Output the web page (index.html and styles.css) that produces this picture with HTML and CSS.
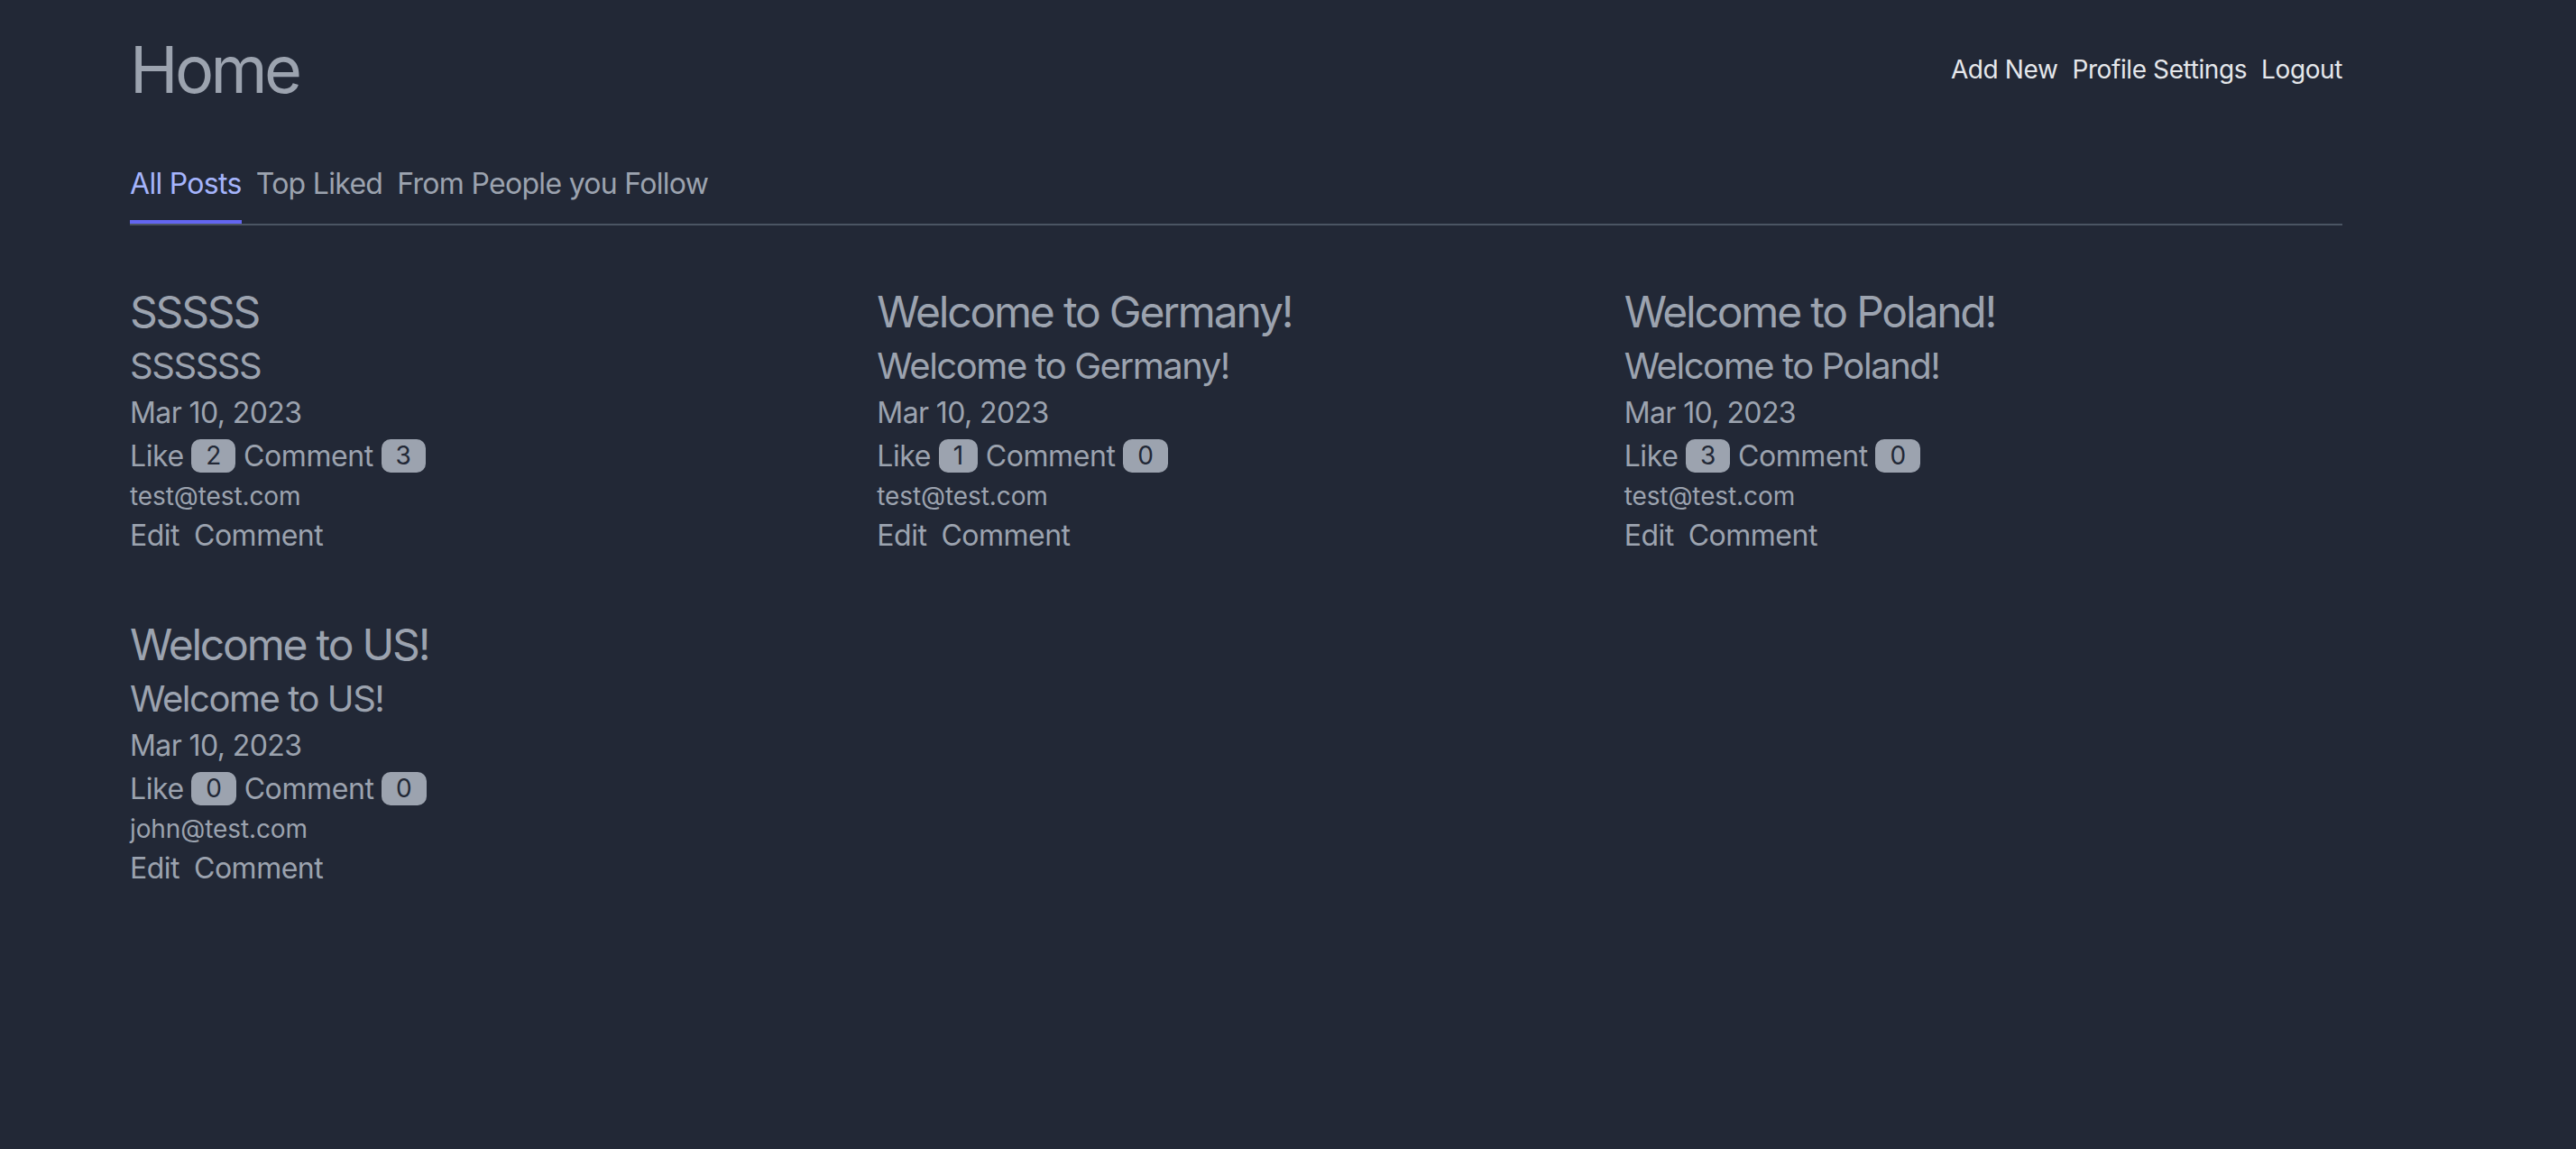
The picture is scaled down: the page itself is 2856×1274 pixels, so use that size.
FILE: index.html
```html
<!DOCTYPE html>
<html lang="en">
<head>
<meta charset="utf-8">
<title>Home</title>
<link rel="stylesheet" href="styles.css">
</head>
<body>
<div class="page">
  <header class="header">
    <h1 class="brand">Home</h1>
    <nav class="nav">
      <a class="nav-link" href="#">Add New</a>
      <a class="nav-link" href="#">Profile Settings</a>
      <a class="nav-link" href="#">Logout</a>
    </nav>
  </header>

  <div class="tabs">
    <a class="tab active" href="#">All Posts</a>
    <a class="tab" href="#">Top Liked</a>
    <a class="tab" href="#">From People you Follow</a>
  </div>

  <main class="posts">
    <article class="post">
      <h2 class="post-title">SSSSS</h2>
      <h3 class="post-sub">SSSSSS</h3>
      <div class="post-date">Mar 10, 2023</div>
      <div class="post-stats">Like <span class="badge">2</span> Comment <span class="badge">3</span></div>
      <div class="post-author">test@test.com</div>
      <div class="post-actions"><a href="#">Edit</a><a href="#">Comment</a></div>
    </article>
    <article class="post">
      <h2 class="post-title">Welcome to Germany!</h2>
      <h3 class="post-sub">Welcome to Germany!</h3>
      <div class="post-date">Mar 10, 2023</div>
      <div class="post-stats">Like <span class="badge">1</span> Comment <span class="badge">0</span></div>
      <div class="post-author">test@test.com</div>
      <div class="post-actions"><a href="#">Edit</a><a href="#">Comment</a></div>
    </article>
    <article class="post">
      <h2 class="post-title">Welcome to Poland!</h2>
      <h3 class="post-sub">Welcome to Poland!</h3>
      <div class="post-date">Mar 10, 2023</div>
      <div class="post-stats">Like <span class="badge">3</span> Comment <span class="badge">0</span></div>
      <div class="post-author">test@test.com</div>
      <div class="post-actions"><a href="#">Edit</a><a href="#">Comment</a></div>
    </article>
    <article class="post">
      <h2 class="post-title">Welcome to US!</h2>
      <h3 class="post-sub">Welcome to US!</h3>
      <div class="post-date">Mar 10, 2023</div>
      <div class="post-stats">Like <span class="badge">0</span> Comment <span class="badge">0</span></div>
      <div class="post-author">john@test.com</div>
      <div class="post-actions"><a href="#">Edit</a><a href="#">Comment</a></div>
    </article>
  </main>
</div>
</body>
</html>
```

FILE: styles.css
```css
* { box-sizing: border-box; }

html, body {
  margin: 0;
  padding: 0;
  background: #222836;
}

body {
  font-family: Inter, "Noto Sans", "Liberation Sans", sans-serif;
  color: #9ca3af;
  min-height: 1274px;
}

a { color: inherit; text-decoration: none; }

.page {
  width: 2453px;
  margin-left: 144px;
  padding-top: 37px;
}

.header {
  display: flex;
  justify-content: space-between;
  align-items: center;
}

.brand {
  margin: 0;
  font-size: 72px;
  line-height: 80px;
  font-weight: 400;
  color: #9ca3af;
  letter-spacing: -3.6px;
}

.nav {
  display: flex;
  gap: 16px;
  font-size: 28px;
  line-height: 40px;
  letter-spacing: -0.4px;
}

.nav-link { color: #e5e7eb; }

.tabs {
  margin-top: 63px;
  display: flex;
  gap: 16px;
  border-bottom: 2px solid #4b5563;
}

.tab {
  font-size: 32px;
  line-height: 48px;
  padding-bottom: 16px;
  border-bottom: 4px solid transparent;
  color: #9ca3af;
  letter-spacing: -0.7px;
}

.tab.active {
  color: #a5b4fc;
  border-bottom-color: #6366f1;
}

.posts {
  margin-top: 64px;
  display: grid;
  grid-template-columns: repeat(3, 1fr);
  column-gap: 32px;
  row-gap: 65px;
}

.post-title {
  margin: 0;
  font-size: 48px;
  line-height: 64px;
  font-weight: 400;
  letter-spacing: -2.2px;
}

.post-sub {
  margin: 0;
  font-size: 40px;
  line-height: 56px;
  font-weight: 400;
  letter-spacing: -1.45px;
}

.post-date,
.post-stats,
.post-actions {
  font-size: 32px;
  line-height: 48px;
}

.post-date { letter-spacing: -0.6px; }
.post-stats { letter-spacing: -0.4px; }
.post-actions { letter-spacing: -0.5px; }

.post-author {
  font-size: 28px;
  line-height: 40px;
  letter-spacing: -0.1px;
}

.badge {
  display: inline-block;
  height: 37px;
  line-height: 37px;
  padding: 0 16px;
  border-radius: 10px;
  background: #9ca3af;
  color: #222836;
  font-size: 28px;
  letter-spacing: 0;
  vertical-align: 2px;
}

.post-actions {
  display: flex;
  gap: 16px;
}
```
